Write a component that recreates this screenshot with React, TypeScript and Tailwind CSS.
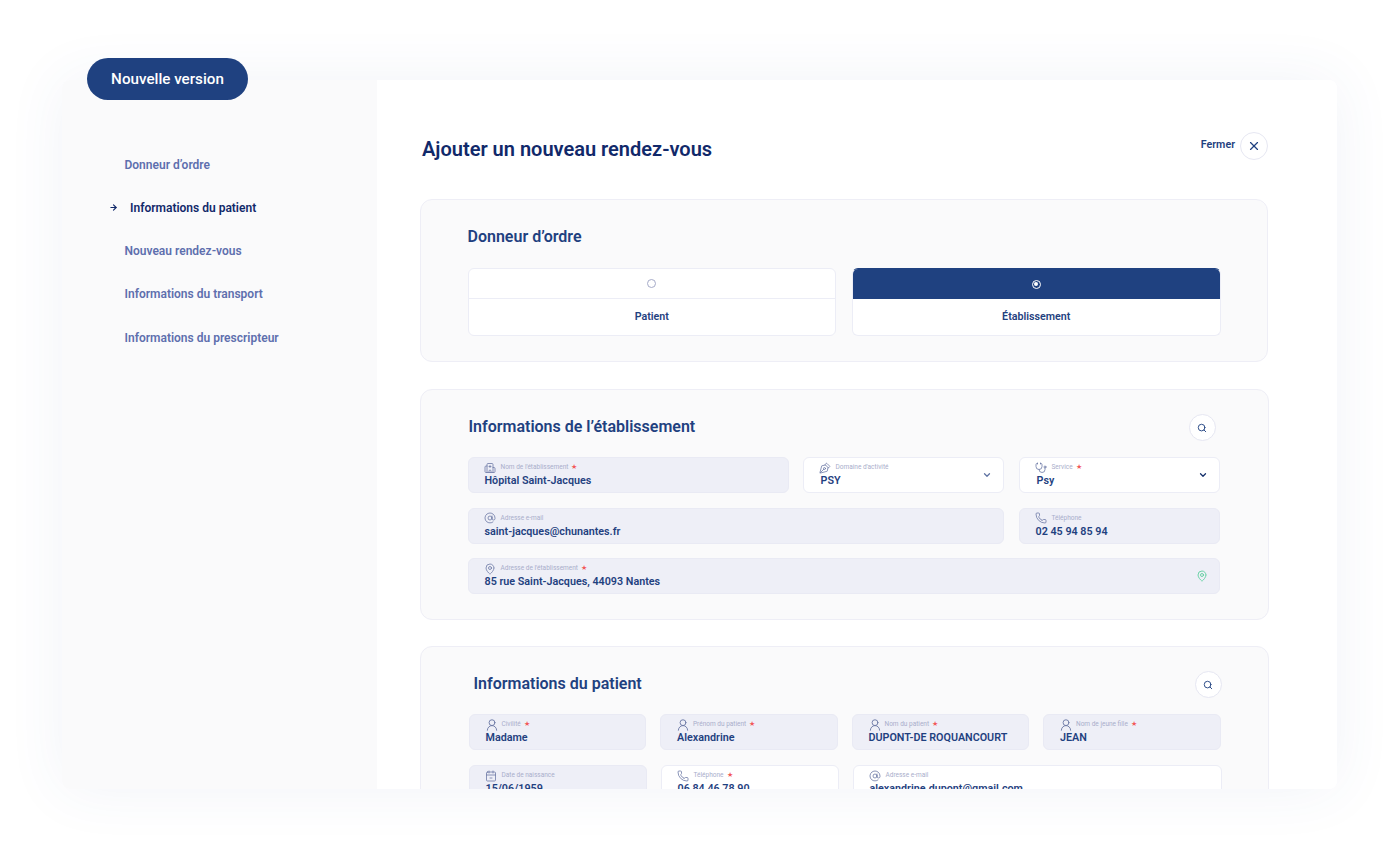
import React from "react";
import { Hospital, PenTool, Stethoscope, AtSign, Phone, MapPin, UserRound, CalendarMinus2, Search, X, ChevronDown, ArrowRight } from "lucide-react";

type FieldProps = {
  icon: React.ElementType;
  label: string;
  value: string;
  req?: boolean;
  white?: boolean;
  cls?: string;
  iconCls?: string;
  select?: boolean;
  selectDark?: boolean;
  pin?: boolean;
};

function Field({ icon: Icon, label, value, req, white, cls, iconCls, select, selectDark, pin }: FieldProps) {
  return (
    <div
      className={
        "relative h-9 rounded-[6px] border pl-[16px] pt-[3px] " +
        (white ? "bg-white border-[#ecedf6] " : "bg-[#eeeff7] border-[#e9eaf4] ") +
        (cls || "")
      }
    >
      <div className="flex h-[13px] items-center">
        <Icon size={12} strokeWidth={1.6} className={"-ml-[1px] text-[#6d7aa6] " + (iconCls || "")} />
        <span className="ml-[5px] text-[6.5px] leading-none text-[#a9aecb]">{label}</span>
        {req && <span className="ml-[3px] text-[7px] leading-none text-[#f25a5a]">★</span>}
      </div>
      <div className={"text-[10.75px] leading-[14px] font-semibold text-[#1f4180] whitespace-nowrap " + (select ? "ml-[1px]" : "")}>{value}</div>
      {select && (
        <ChevronDown
          size={10}
          strokeWidth={3}
          className={"absolute right-[11px] top-[12px] " + (selectDark ? "text-[#14306b]" : "text-[#5f73a3]")}
        />
      )}
      {pin && <MapPin size={12} strokeWidth={1.8} className="absolute right-[11px] top-[11px] text-[#5fcf9f]" />}
    </div>
  );
}

function RoundBtn({ size, children }: { size: string; children: React.ReactNode }) {
  return (
    <div className={"flex items-center justify-center rounded-full border border-[#e6e7f2] bg-white " + size}>{children}</div>
  );
}

const navItems = ["Donneur d’ordre", "Informations du patient", "Nouveau rendez-vous", "Informations du transport", "Informations du prescripteur"];
const userIcon = "-my-[1px] -mr-[2px] size-[14px]";

export default function App() {
  return (
    <div className="h-[856px] w-[1400px] overflow-hidden bg-white pt-[80px] pl-[62px] font-['Roboto',sans-serif]">
      <div className="flex h-[709px] w-[1275px] rounded-[8px] shadow-[0_0_60px_rgba(63,80,160,0.07)]">
        <aside className="w-[315px] shrink-0 rounded-l-[8px] bg-[#fafafb]">
          <div className="ml-[25px] -mt-[22px] flex h-[42px] w-[161px] items-center justify-center rounded-full bg-[#1f4180] text-[15.2px] font-medium text-white">
            Nouvelle version
          </div>
          <nav className="mt-[56px] flex flex-col gap-[26.25px]">
            {navItems.map((t, i) =>
              i === 1 ? (
                <div key={t} className="ml-[47px] flex h-[17px] items-center text-[12px] font-semibold text-[#11296a]">
                  <ArrowRight size={9} strokeWidth={3} className="mr-[12px]" />
                  {t}
                </div>
              ) : (
                <div key={t} className="ml-[62.5px] flex h-[17px] items-center text-[12px] font-semibold text-[#5e6fae]">
                  {t}
                </div>
              )
            )}
          </nav>
        </aside>
        <main className="h-full flex-1 overflow-hidden rounded-r-[8px] bg-white pl-[43px]">
          <div className="flex h-[119px] w-[848px] items-start justify-between pt-[55px]">
            <h1 className="ml-[2px] text-[20px] leading-[28px] font-semibold text-[#11296a]">Ajouter un nouveau rendez-vous</h1>
            <div className="-mt-[3px] flex items-center">
              <span className="-mt-[1px] mr-[5px] text-[10.7px] font-semibold text-[#1f4180]">Fermer</span>
              <RoundBtn size="h-7 w-7">
                <X size={14} strokeWidth={2} className="text-[#1f4180]" />
              </RoundBtn>
            </div>
          </div>

          <section className="h-[163px] w-[848px] rounded-[12px] border border-[#eeeef6] bg-[#fafafb] px-[46.5px] pt-[26px]">
            <h2 className="text-[16px] leading-[22px] font-semibold text-[#1f4180]">Donneur d’ordre</h2>
            <div className="mt-[20px] grid grid-cols-2 gap-4">
              {[
                { t: "Patient", on: false },
                { t: "Établissement", on: true },
              ].map(({ t, on }) => (
                <div key={t} className={"h-[68px] overflow-hidden rounded-[6px] border border-[#ecedf6] bg-white " + (on ? "border-t-[#1f4180]" : "")}>
                  <div className={"flex h-[30px] items-center justify-center " + (on ? "bg-[#1f4180]" : "border-b border-[#ecedf6]")}>
                    {on ? (
                      <span className="flex h-[9px] w-[9px] items-center justify-center rounded-full border border-white">
                        <span className="h-[4px] w-[4px] rounded-full bg-white" />
                      </span>
                    ) : (
                      <span className="h-[9px] w-[9px] rounded-full border border-[#a5aac8]" />
                    )}
                  </div>
                  <div className="flex h-[36px] items-center justify-center pt-[1px] text-[10.7px] font-semibold text-[#1f4180]">{t}</div>
                </div>
              ))}
            </div>
          </section>

          <section className="mt-[27px] h-[231px] w-[849px] rounded-[12px] border border-[#eeeef6] bg-[#fafafb] pl-[46.5px] pt-[23px]">
            <div className="flex h-[31px] w-[748px] items-start justify-between">
              <h2 className="mt-[3px] ml-[1px] text-[16px] leading-[22px] font-semibold text-[#1f4180]">Informations de l’établissement</h2>
              <RoundBtn size="h-[27px] w-[27px] mt-[1px]">
                <Search size={10} strokeWidth={2.2} className="text-[#1f4180]" />
              </RoundBtn>
            </div>
            <div className="mt-[13px] flex flex-col gap-[14.5px]">
              <div className="flex w-[752px]">
                <Field icon={Hospital} label="Nom de l'établissement" value="Hôpital Saint-Jacques" req cls="w-[321px]" />
                <Field icon={PenTool} iconCls="-scale-y-100" label="Domaine d'activité" value="PSY" white select cls="ml-[14px] w-[201px]" />
                <Field icon={Stethoscope} label="Service" value="Psy" req white select selectDark cls="ml-[15px] w-[201px]" />
              </div>
              <div className="flex w-[752px]">
                <Field icon={AtSign} label="Adresse e-mail" value="saint-jacques@chunantes.fr" cls="w-[536px]" />
                <Field icon={Phone} label="Téléphone" value="02 45 94 85 94" cls="ml-[15px] w-[201px]" />
              </div>
              <Field icon={MapPin} label="Adresse de l'établissement" value="85 rue Saint-Jacques, 44093 Nantes" req pin cls="w-[752px]" />
            </div>
          </section>

          <section className="mt-[26px] h-[300px] w-[849px] rounded-[12px] border border-[#eeeef6] bg-[#fafafb] pl-[47.5px] pt-[23px]">
            <div className="flex h-[30px] w-[753px] items-start justify-between">
              <h2 className="mt-[3px] ml-[5px] text-[16px] leading-[22px] font-semibold text-[#1f4180]">Informations du patient</h2>
              <RoundBtn size="h-[27px] w-[27px] mt-[1px]">
                <Search size={10} strokeWidth={2.2} className="text-[#1f4180]" />
              </RoundBtn>
            </div>
            <div className="mt-[14px] flex flex-col gap-[15px]">
              <div className="flex w-[753px] gap-[14px]">
                <Field icon={UserRound} iconCls={userIcon} label="Civilité" value="Madame" req cls="w-[177.5px]" />
                <Field icon={UserRound} iconCls={userIcon} label="Prénom du patient" value="Alexandrine" req cls="w-[177.5px]" />
                <Field icon={UserRound} iconCls={userIcon} label="Nom du patient" value="DUPONT-DE ROQUANCOURT" req cls="w-[177.5px]" />
                <Field icon={UserRound} iconCls={userIcon} label="Nom de jeune fille" value="JEAN" req cls="w-[177.5px]" />
              </div>
              <div className="flex w-[753px]">
                <Field icon={CalendarMinus2} label="Date de naissance" value="15/06/1959" cls="w-[178px]" />
                <Field icon={Phone} label="Téléphone" value="06 84 46 78 90" req white cls="ml-[14px] w-[178px]" />
                <Field icon={AtSign} label="Adresse e-mail" value="alexandrine.dupont@gmail.com" white cls="ml-[14px] w-[369px]" />
              </div>
            </div>
          </section>
        </main>
      </div>
    </div>
  );
}
